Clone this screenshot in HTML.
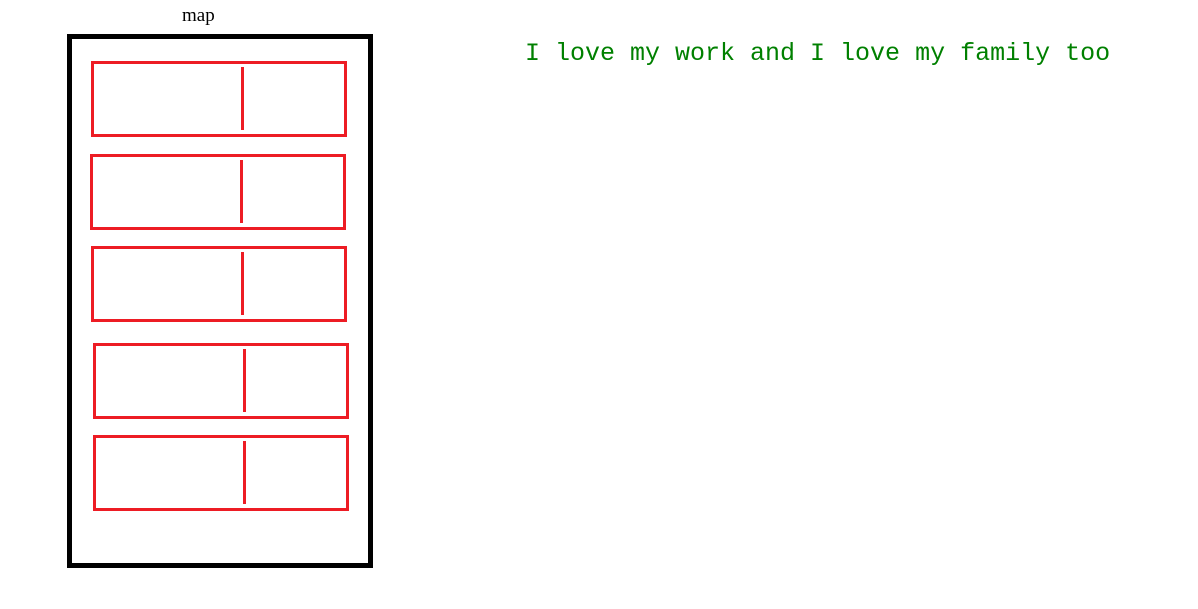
<!DOCTYPE html>
<html><head><style>
body{margin:0;width:1198px;height:609px;background:#fff;position:relative;overflow:hidden}
.o{position:absolute;left:67px;top:34px;width:296px;height:524px;border:5px solid #000}
.r{position:absolute;border:3px solid #ed1c24;width:250px;height:70px;box-sizing:content-box}
.l{position:absolute;width:3px;height:63px;background:#ed1c24}
.t{position:absolute;font-family:"Liberation Mono",monospace}
</style></head><body>
<div class="t" style="left:182px;top:5px;font-size:19px;color:#000;font-family:'Liberation Serif',serif">map</div>
<div class="o"></div>
<div class="r" style="left:91px;top:61px"></div><div class="l" style="left:241px;top:67px"></div>
<div class="r" style="left:90px;top:154px"></div><div class="l" style="left:240px;top:160px"></div>
<div class="r" style="left:91px;top:246px"></div><div class="l" style="left:241px;top:252px"></div>
<div class="r" style="left:93px;top:343px"></div><div class="l" style="left:243px;top:349px"></div>
<div class="r" style="left:93px;top:435px"></div><div class="l" style="left:243px;top:441px"></div>
<div class="t" style="left:525px;top:39px;font-size:25px;color:#008000;white-space:nowrap">I love my work and I love my family too</div>
</body></html>
